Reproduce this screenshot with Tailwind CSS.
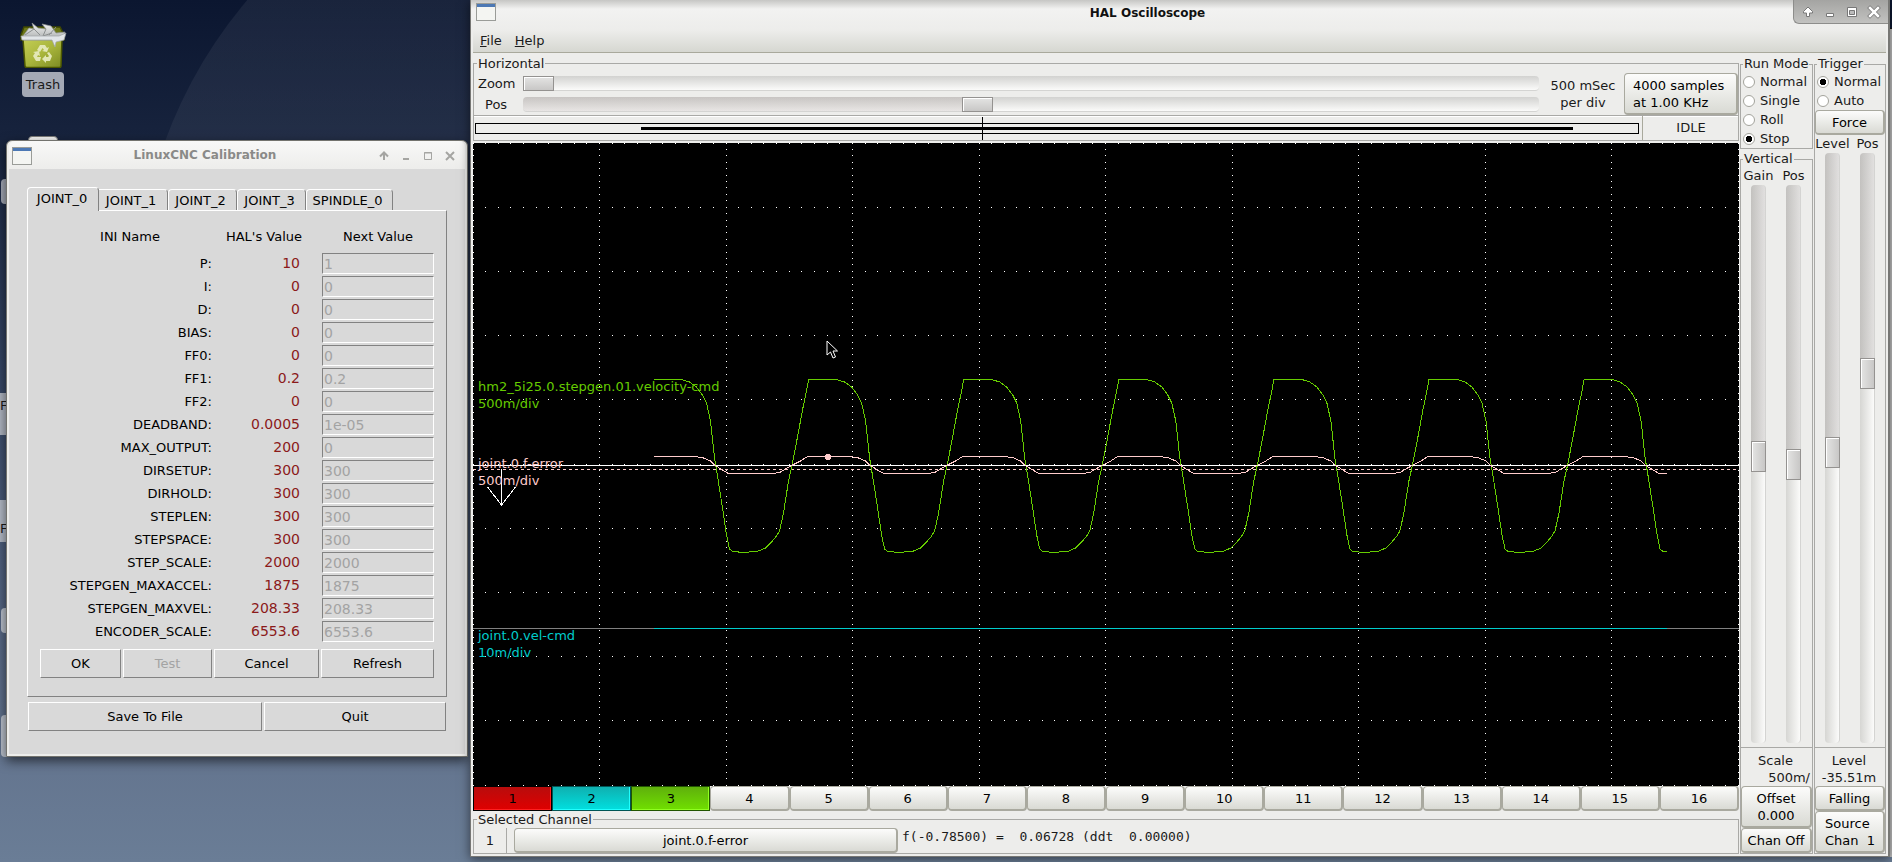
<!DOCTYPE html>
<html lang="en">
<head>
<meta charset="utf-8">
<title>HAL Oscilloscope</title>
<script src="https://cdn.jsdelivr.net/npm/@tailwindcss/browser@4"></script>
</head>
<body class="relative h-screen overflow-hidden bg-[linear-gradient(#0b1630_0%,#17233d_16%,#354563_42%,#50617f_65%,#64758f_88%,#6a7d96_100%)] text-[13px] leading-[17px] text-[#1a1a1a] [font-family:'DejaVu_Sans',sans-serif]">

<!-- desktop -->
<div class="absolute -top-[163px] left-[137px] size-[926px] rounded-full bg-[linear-gradient(#ffffff12,#ffffff0c_40%,transparent_70%)]"></div>
<div class="absolute top-5 left-[15px] flex w-14 flex-col items-center gap-1">
  <svg class="h-12 w-14" viewBox="0 0 56 48" aria-hidden="true">
    <defs>
      <linearGradient id="bin" x2="1" y2="1"><stop stop-color="#c3cd55"/><stop offset=".5" stop-color="#a9b63c"/><stop offset="1" stop-color="#7c8a22"/></linearGradient>
      <linearGradient id="paper" x2="0" y2="1"><stop stop-color="#f4f4f4"/><stop offset="1" stop-color="#a9adad"/></linearGradient>
    </defs>
    <path d="M9 7H45L49 15V20H6V15Z" fill="#6c7717" stroke="#3e4700" stroke-width="1.5"/>
    <path d="M8 19H47L46 46Q46 47.500 44 47.500H12Q10 47.500 10 46Z" fill="url(#bin)" stroke="#4d5800" stroke-width="1.500"/>
    <path d="M8 16L14 8L19 9L17 3L23 8L31 9L27 4L36 6L41 13L50 12L47 20H8Z" fill="url(#paper)" stroke="#8e9292" stroke-width=".7"/>
    <path d="M10 15L19 9L25 15M31 9L28 16L37 13M41 7L34 15" fill="none" stroke="#8b8f8f"/>
    <path d="M6 16H44L51 13L49 20L41 22L40 27L37 20H7Z" fill="#e1e5e8" stroke="#a0a5a8" stroke-width=".7"/>
    <g fill="#e2e7b5">
      <path d="M22 30L25 25H30L32 28L34 27L32 32L27 31L29 30L27.500 28L25 32Z"/>
      <path d="M34 32L37 36L35 41H31V43L27 39L31 35V37H33L34 36L32 33Z"/>
      <path d="M25 41H21L18 36L20 33L18 32L24 31L25 36L23 35L22 37H26Z"/>
    </g>
  </svg>
  <span class="rounded bg-[#a4a9b5] px-1 py-1">Trash</span>
</div>
<div class="absolute top-[136px] left-7 h-3 w-[30px] rounded-t-sm border border-[#7b7b78] bg-[#f4f4f2]"></div>
<div class="absolute top-[179px] left-px h-[25px] w-5 rounded bg-[#a4a9b5]"></div>
<div class="absolute top-[393px] left-0 h-[42px] w-5 bg-[#b0b6c2] pt-1">F</div>
<div class="absolute top-[500px] left-0 h-[42px] w-5 bg-[#b4bbc7] pt-5">F</div>
<div class="absolute top-[608px] left-px h-[25px] w-5 rounded bg-[#bcc3ce]"></div>
<div class="absolute top-[715px] left-px h-[42px] w-5 rounded bg-[#bcc3ce]"></div>

<!-- calibration window -->
<section class="absolute top-[140px] left-[6px] w-[462px] rounded-t-md border border-[#73736e] bg-[#ededeb] px-[2px] pb-[2px] text-black shadow-[0_4px_12px_#0009]">
  <header class="flex h-7 items-center rounded-t-md bg-[linear-gradient(#f8f8f7,#ededeb)] pt-px pr-[7px] pl-[3px]">
    <svg class="h-[18px] w-5" viewBox="0 0 20 18" aria-hidden="true"><rect x=".5" y=".5" width="19" height="17" fill="#f4f5f2" stroke="#9a9c98"/><path d="M1 1H19V4H1Z" fill="#4c78b4"/></svg>
    <h1 class="flex-1 pl-[2px] text-center text-[12px] font-bold text-[#8a8a88]">LinuxCNC Calibration</h1>
    <div class="flex gap-[6px] text-[#a5a5a2]">
      <button aria-label="Shade" class="size-4"><svg viewBox="0 0 16 16" fill="none" stroke="currentColor" stroke-width="2"><path d="M8 12V5M4 8.500L8 4.500L12 8.500"/></svg></button>
      <button aria-label="Minimize" class="size-4"><svg viewBox="0 0 16 16"><path d="M5 10H11V12H5Z" fill="currentColor"/></svg></button>
      <button aria-label="Maximize" class="size-4"><svg viewBox="0 0 16 16" fill="none" stroke="currentColor"><path d="M4.500 4.500H11.500V11.500H4.500Z"/><path d="M4 5H12"/></svg></button>
      <button aria-label="Close" class="size-4"><svg viewBox="0 0 16 16" fill="none" stroke="currentColor" stroke-width="2"><path d="M4 4L12 12M12 4L4 12"/></svg></button>
    </div>
  </header>
  <div class="bg-[#d9d9d9] pt-[18px] pr-[18px] pb-[23px] pl-[18px]">
    <div role="tablist" class="flex items-end">
      <button role="tab" aria-selected="true" class="relative -mb-px h-6 w-[72px] rounded-t-sm border-t border-r border-l border-t-white border-r-[#828282] border-l-white bg-[#d9d9d9] pr-[2px] pb-[2px]">JOINT_0</button>
      <button role="tab" class="h-[21px] w-[69px] rounded-tr-sm border-t border-r border-t-white border-r-[#828282] pr-1">JOINT_1</button>
      <button role="tab" class="h-[21px] w-[69px] rounded-t-sm border-t border-r border-l border-t-white border-r-[#828282] border-l-white pr-1">JOINT_2</button>
      <button role="tab" class="h-[21px] w-[69px] rounded-t-sm border-t border-r border-l border-t-white border-r-[#828282] border-l-white pr-1">JOINT_3</button>
      <button role="tab" class="h-[21px] w-[87px] rounded-t-sm border-t border-r border-l border-t-white border-r-[#828282] border-l-white pr-1">SPINDLE_0</button>
    </div>
    <div role="tabpanel" class="border border-t-white border-r-[#828282] border-b-[#828282] border-l-white pt-[9px] pr-3 pb-[18px] pl-3">
      <table class="w-full table-fixed border-collapse">
        <thead>
          <tr class="h-8"><th class="w-[172px] pl-2 font-normal">INI Name</th><th class="pr-[6px] font-normal">HAL's Value</th><th class="w-[112px] font-normal">Next Value</th></tr>
        </thead>
        <tbody id="params"></tbody>
      </table>
      <div class="mt-[6px] flex gap-[2px]">
        <button class="h-[29px] w-[81px] border border-t-white border-r-[#828282] border-b-[#828282] border-l-white">OK</button>
        <button disabled class="h-[29px] w-[89px] border border-t-white border-r-[#828282] border-b-[#828282] border-l-white text-[#a3a3a3]">Test</button>
        <button class="h-[29px] w-[105px] border border-t-white border-r-[#828282] border-b-[#828282] border-l-white">Cancel</button>
        <button class="h-[29px] flex-1 border border-t-white border-r-[#828282] border-b-[#828282] border-l-white">Refresh</button>
      </div>
    </div>
    <div class="mt-[5px] flex gap-[2px] px-px">
      <button class="h-[29px] w-[234px] border border-t-white border-r-[#828282] border-b-[#828282] border-l-white">Save To File</button>
      <button class="h-[29px] flex-1 border border-t-white border-r-[#828282] border-b-[#828282] border-l-white">Quit</button>
    </div>
  </div>
</section>

<div class="absolute top-7 right-0 bottom-[5px] w-[3px] border-t border-[#111] bg-[#c4c4c4]"></div>

<!-- oscilloscope window -->
<section class="absolute top-0 right-[2px] bottom-[5px] left-[470px] flex flex-col border-r-2 border-b border-l border-[#777774] bg-[#ededeb] pr-[2px] pb-[2px] pl-[2px] shadow-[0_2px_10px_#0008]">
  <header class="-mx-[2px] flex h-[30px] bg-[linear-gradient(#c6c6c4,#f2f2f1_30%,#ededeb)] pl-[5px]">
    <svg class="mt-[3px] h-[18px] w-5" viewBox="0 0 20 18" aria-hidden="true"><rect x=".5" y=".5" width="19" height="17" fill="#f4f5f2" stroke="#9a9c98"/><path d="M1 1H19V4H1Z" fill="#4c78b4"/></svg>
    <h1 class="flex-1 pt-[5px] pl-[6px] text-center text-[12px] font-bold text-[#111]">HAL Oscilloscope</h1>
    <div class="flex h-6 items-center gap-[6px] rounded-bl-md border-b border-l border-[#8d8d8b] bg-[linear-gradient(#a4a4a2,#c2c2c0)] px-[6px]">
      <button aria-label="Shade" class="size-4"><svg viewBox="0 0 16 16"><path d="M8 3L12.500 7.500V9H9.500V12.500H6.500V9H3.500V7.500Z" fill="#fff" stroke="#777"/></svg></button>
      <button aria-label="Minimize" class="size-4"><svg viewBox="0 0 16 16"><path d="M4.500 9.500H11.500V12.500H4.500Z" fill="#fff" stroke="#777"/></svg></button>
      <button aria-label="Maximize" class="size-4"><svg viewBox="0 0 16 16"><path d="M3.500 3.500H12.500V12.500H3.500Z" fill="#fff" stroke="#777"/><path d="M5.500 6.500H10.500V10.500H5.500Z" fill="#bbb" stroke="#777"/></svg></button>
      <button aria-label="Close" class="size-4"><svg viewBox="0 0 16 16" fill="none"><path d="M4 4L12 12M12 4L4 12" stroke="#777" stroke-width="4" stroke-linecap="square"/><path d="M4 4L12 12M12 4L4 12" stroke="#fff" stroke-width="2.500" stroke-linecap="square"/></svg></button>
    </div>
  </header>
  <nav class="flex h-[23px] items-center gap-[13px] border-b border-[#a9a99c] bg-[linear-gradient(#ededeb,#d6d7d1)] pb-[2px] pl-[7px]">
    <button class="leading-[17px]"><span class="underline">F</span>ile</button>
    <button class="leading-[17px]"><span class="underline">H</span>elp</button>
  </nav>

  <div class="flex min-h-0 flex-1">
    <div class="flex min-w-0 flex-1 flex-col">
      <fieldset class="mt-[2px] mb-[2px] h-[86px] min-w-0 border border-[#a9a9a6]">
        <legend class="ml-[3px] h-[17px] px-px">Horizontal</legend>
        <div class="flex h-[43px] items-end">
          <div class="flex min-w-0 flex-1 flex-col gap-1 self-start pt-[3px] pr-[9px]">
            <div class="flex h-[17px] items-center">
              <label for="zoom" class="w-[49px] pl-1">Zoom</label>
              <input id="zoom" type="range" min="0" max="1000" value="0" class="h-[15px] min-w-0 flex-1 appearance-none rounded-sm border-b border-[#d4d4d2] bg-[linear-gradient(#d2d2d0,#fbfbfa)] [&::-webkit-slider-thumb]:h-[15px] [&::-webkit-slider-thumb]:w-[31px] [&::-webkit-slider-thumb]:appearance-none [&::-webkit-slider-thumb]:border [&::-webkit-slider-thumb]:border-[#949290] [&::-webkit-slider-thumb]:bg-[linear-gradient(#e4e4e3,#c8c7c6)] [&::-webkit-slider-thumb]:shadow-[inset_1px_1px_#fff]">
            </div>
            <div class="flex h-[17px] items-center">
              <label for="hpos" class="w-[49px] pl-[11px]">Pos</label>
              <input id="hpos" type="range" min="0" max="1000" value="446" class="h-[15px] min-w-0 flex-1 appearance-none rounded-sm border-b border-[#d4d4d2] bg-[linear-gradient(to_right,#9d8f8c33_44%,transparent_44%),linear-gradient(#d2d2d0,#fbfbfa)] [&::-webkit-slider-thumb]:h-[15px] [&::-webkit-slider-thumb]:w-[31px] [&::-webkit-slider-thumb]:appearance-none [&::-webkit-slider-thumb]:border [&::-webkit-slider-thumb]:border-[#949290] [&::-webkit-slider-thumb]:bg-[linear-gradient(#e4e4e3,#c8c7c6)] [&::-webkit-slider-thumb]:shadow-[inset_1px_1px_#fff]">
            </div>
          </div>
          <div class="mr-[6px] w-[70px] pb-1 text-center whitespace-nowrap">500 mSec<br>per div</div>
          <button class="h-[42px] w-[114px] rounded-sm border border-r-2 border-b-2 border-[#a9a99f] bg-[linear-gradient(#fcfcfb,#d9dad4)] pl-2 text-left text-black">4000 samples<br>at 1.00 KHz</button>
        </div>
        <div class="flex h-[25px] border-t border-[#a9a9a6] shadow-[inset_0_1px_#fff]">
          <div class="min-w-0 flex-1 px-px pr-[3px]">
            <svg class="h-6 w-full" viewBox="0 0 1164 24" preserveAspectRatio="none" shape-rendering="crispEdges" aria-label="Record position">
              <path d="M.5 7.500H1163.500V17.500H.5Z" fill="none" stroke="#000"/>
              <path d="M166 11H1098V14H166Z"/><path d="M507 1H508V24H507Z"/>
            </svg>
          </div>
          <output class="w-[96px] border-l border-[#a9a99c] pt-[3px] pl-px text-center">IDLE</output>
        </div>
      </fieldset>

      <div class="relative min-h-0 flex-1 bg-black">
        <svg class="absolute inset-0 h-full w-full" viewBox="0 0 1266 643" preserveAspectRatio="none" shape-rendering="crispEdges" fill="none" aria-label="Scope traces">
          <path id="grid" fill="#fff"/>
          <path d="M0 485.500H1266" stroke="#808080"/>
          <path d="M181 485.500H1194" stroke="#00cccc"/>
          <path d="M0 322.500H1266" stroke="#fff"/>
          <path d="M0 326.500H1266" stroke="#ffcccc" stroke-dasharray="3 3"/>
          <path id="velocity" stroke="#66cc00"/>
          <path id="ferror" stroke="#ffcccc"/>
          <path d="M28.500 326V362M14.500 344L28.500 362L42.500 344" stroke="#fff"/>
          <circle cx="355" cy="314" r="3" fill="#ffcccc"/>
        </svg>
        <p class="absolute top-[235px] left-[5px] text-[#66cc00]">hm2_5i25.0.stepgen.01.velocity-cmd<br>500m/div</p>
        <p class="absolute top-[312px] left-[5px] text-[#ffcccc]">joint.0.f-error<br>500m/div</p>
        <p class="absolute top-[484px] left-[5px] text-[#00cccc]">joint.0.vel-cmd<br>10m/div</p>
        <svg class="absolute top-[197px] left-[353px] h-[19px] w-3" viewBox="0 0 12 19" aria-hidden="true"><path d="M1 1V15L4.500 12L7 18L9.500 17L7 11H11.500Z" fill="#000" stroke="#fff"/></svg>
      </div>

      <div id="channels" class="grid h-[25px] grid-cols-16">
        <button class="border border-black bg-[linear-gradient(#b80c0c,#e00000)] text-black shadow-[inset_-1px_-1px_#ff2020]">1</button>
        <button class="border border-[#055] bg-[linear-gradient(#0fb0b0,#00e0e0)] text-black shadow-[inset_-1px_-1px_#20ffff]">2</button>
        <button class="border border-[#250] bg-[linear-gradient(#5fb00c,#70e000)] text-black shadow-[inset_-1px_-1px_#90ff20]">3</button>
      </div>

      <fieldset class="min-w-0 border border-[#a9a9a6]">
        <legend class="ml-[3px] h-[17px] px-px">Selected Channel</legend>
        <div class="flex h-[25px] items-start">
          <output class="h-[25px] w-[33px] border-r border-[#a9a9a6] pt-1 text-center">1</output>
          <button class="ml-[7px] h-[25px] w-[384px] rounded-sm border border-r-2 border-b-2 border-[#a9a99f] bg-[linear-gradient(#fcfcfb,#d9dad4)] text-black">joint.0.f-error</button>
          <output class="ml-1 whitespace-pre [font-family:'DejaVu_Sans_Mono',monospace]">f(-0.78500) =  0.06728 (ddt  0.00000)</output>
        </div>
      </fieldset>
    </div>

    <div class="ml-px flex w-[73px] flex-col pt-[3px]">
      <fieldset class="min-w-0 border border-[#a9a9a6]">
        <legend class="ml-[2px] h-4 px-px leading-4 whitespace-nowrap">Run Mode</legend>
        <div id="runmode"></div>
      </fieldset>
      <fieldset class="mt-[2px] flex min-h-0 min-w-0 flex-1 flex-col border border-[#a9a9a6]">
        <legend class="ml-[2px] h-4 px-px leading-4">Vertical</legend>
        <div class="flex h-full flex-col">
          <div class="flex min-h-0 flex-1 pb-1">
            <label class="flex w-[35px] flex-col items-center gap-px">Gain
              <input type="range" min="0" max="1000" value="486" class="min-h-0 w-[15px] flex-1 appearance-none rounded-sm border-r border-[#d4d4d2] bg-[linear-gradient(#77707033_50%,transparent_50%),linear-gradient(to_right,#d6d6d3,#fbfbfa)] [writing-mode:vertical-lr] [&::-webkit-slider-thumb]:h-[31px] [&::-webkit-slider-thumb]:w-[15px] [&::-webkit-slider-thumb]:appearance-none [&::-webkit-slider-thumb]:border [&::-webkit-slider-thumb]:border-[#949290] [&::-webkit-slider-thumb]:bg-[linear-gradient(to_right,#e4e4e3,#c8c7c6)] [&::-webkit-slider-thumb]:shadow-[inset_1px_1px_#fff]">
            </label>
            <label class="flex w-[35px] flex-col items-center gap-px">Pos
              <input type="range" min="0" max="1000" value="500" class="min-h-0 w-[15px] flex-1 appearance-none rounded-sm border-r border-[#d4d4d2] bg-[linear-gradient(#77707033_50%,transparent_50%),linear-gradient(to_right,#d6d6d3,#fbfbfa)] [writing-mode:vertical-lr] [&::-webkit-slider-thumb]:h-[31px] [&::-webkit-slider-thumb]:w-[15px] [&::-webkit-slider-thumb]:appearance-none [&::-webkit-slider-thumb]:border [&::-webkit-slider-thumb]:border-[#949290] [&::-webkit-slider-thumb]:bg-[linear-gradient(to_right,#e4e4e3,#c8c7c6)] [&::-webkit-slider-thumb]:shadow-[inset_1px_1px_#fff]">
            </label>
          </div>
          <div class="border-t border-[#a9a9a6] pt-1 pr-[2px] text-center">Scale</div>
          <div class="pr-[2px] text-right">500m/</div>
          <button class="h-[42px] rounded-sm border border-r-2 border-b-2 border-[#a9a99f] bg-[linear-gradient(#fcfcfb,#d9dad4)] text-black">Offset<br>0.000</button>
          <button class="h-[25px] rounded-sm border border-r-2 border-b-2 border-[#a9a99f] bg-[linear-gradient(#fcfcfb,#d9dad4)] whitespace-nowrap text-black">Chan Off</button>
        </div>
      </fieldset>
    </div>

    <div class="ml-px flex w-[72px] flex-col pt-[3px]">
      <fieldset class="flex min-h-0 min-w-0 flex-1 flex-col border border-[#a9a9a6]">
        <legend class="ml-[2px] h-4 px-px leading-4">Trigger</legend>
        <div class="flex h-full flex-col">
          <div id="trigmode"></div>
          <button class="h-[25px] shrink-0 rounded-sm border border-r-2 border-b-2 border-[#a9a99f] bg-[linear-gradient(#fcfcfb,#d9dad4)] text-black">Force</button>
          <div class="flex min-h-0 flex-1 pb-1">
            <label class="flex w-[35px] flex-col items-center gap-px">Level
              <input type="range" min="0" max="1000" value="508" class="min-h-0 w-[15px] flex-1 appearance-none rounded-sm border-r border-[#d4d4d2] bg-[linear-gradient(#77707033_50%,transparent_50%),linear-gradient(to_right,#d6d6d3,#fbfbfa)] [writing-mode:vertical-lr] [&::-webkit-slider-thumb]:h-[31px] [&::-webkit-slider-thumb]:w-[15px] [&::-webkit-slider-thumb]:appearance-none [&::-webkit-slider-thumb]:border [&::-webkit-slider-thumb]:border-[#949290] [&::-webkit-slider-thumb]:bg-[linear-gradient(to_right,#e4e4e3,#c8c7c6)] [&::-webkit-slider-thumb]:shadow-[inset_1px_1px_#fff]">
            </label>
            <label class="flex w-[35px] flex-col items-center gap-px">Pos
              <input type="range" min="0" max="1000" value="367" class="min-h-0 w-[15px] flex-1 appearance-none rounded-sm border-r border-[#d4d4d2] bg-[linear-gradient(#77707033_37%,transparent_37%),linear-gradient(to_right,#d6d6d3,#fbfbfa)] [writing-mode:vertical-lr] [&::-webkit-slider-thumb]:h-[31px] [&::-webkit-slider-thumb]:w-[15px] [&::-webkit-slider-thumb]:appearance-none [&::-webkit-slider-thumb]:border [&::-webkit-slider-thumb]:border-[#949290] [&::-webkit-slider-thumb]:bg-[linear-gradient(to_right,#e4e4e3,#c8c7c6)] [&::-webkit-slider-thumb]:shadow-[inset_1px_1px_#fff]">
            </label>
          </div>
          <div class="border-t border-[#a9a9a6] pt-1 pr-[2px] text-center">Level</div>
          <div class="pr-[2px] text-center">-35.51m</div>
          <button class="h-[25px] rounded-sm border border-r-2 border-b-2 border-[#a9a99f] bg-[linear-gradient(#fcfcfb,#d9dad4)] text-black">Falling</button>
          <button class="h-[42px] rounded-sm border border-r-2 border-b-2 border-[#a9a99f] bg-[linear-gradient(#fcfcfb,#d9dad4)] pl-[9px] text-left whitespace-pre text-black">Source<br>Chan  1</button>
        </div>
      </fieldset>
    </div>
  </div>
</section>

<script>
// tuning parameters: name, value in HAL, pending value
const params = [['P','10','1'],['I','0','0'],['D','0','0'],['BIAS','0','0'],['FF0','0','0'],['FF1','0.2','0.2'],['FF2','0','0'],
  ['DEADBAND','0.0005','1e-05'],['MAX_OUTPUT','200','0'],['DIRSETUP','300','300'],['DIRHOLD','300','300'],['STEPLEN','300','300'],
  ['STEPSPACE','300','300'],['STEP_SCALE','2000','2000'],['STEPGEN_MAXACCEL','1875','1875'],['STEPGEN_MAXVEL','208.33','208.33'],['ENCODER_SCALE','6553.6','6553.6']];
document.getElementById('params').innerHTML = params.map(([n, v, next]) => `<tr class="h-[23px]">
  <th class="p-0 text-right font-normal"><label for="p-${n}">${n}:</label></th>
  <td class="p-0 pr-[22px] text-right text-[14px] text-[#8b1a1a]">${v}</td>
  <td class="p-0"><input id="p-${n}" disabled value="${next}" class="block h-[21px] w-full border border-t-[#828282] border-r-white border-b-white border-l-[#828282] bg-[#d9d9d9] pl-px text-[14px] text-[#a3a3a3]"></td></tr>`).join('');

const radios = (group, names, on) => names.map(n => `<label class="flex h-[19px] items-center gap-[5px] pl-[2px] whitespace-nowrap">
  <input type="radio" name="${group}" ${n === on ? 'checked' : ''} class="size-3 shrink-0 appearance-none rounded-full border border-[#a3a39c] bg-white checked:bg-[radial-gradient(#000_3px,#fff_3px)]">${n}</label>`).join('');
document.getElementById('runmode').innerHTML = radios('run', ['Normal', 'Single', 'Roll', 'Stop'], 'Stop');
document.getElementById('trigmode').innerHTML = radios('trig', ['Normal', 'Auto'], 'Normal');

let buttons = '';
for (let i = 4; i <= 16; i++) buttons += `<button class="rounded-sm border border-r-2 border-b-2 border-[#a9a99f] bg-[linear-gradient(#fcfcfb,#d9dad4)] text-black">${i}</button>`;
document.getElementById('channels').insertAdjacentHTML('beforeend', buttons);

// graticule: 10 x 10 divisions with 10 dots to each
let dots = '';
const dot = (x, y) => { dots += `M${Math.floor(x)} ${Math.floor(y)}h1v1h-1z`; };
for (let d = 0; d <= 10; d++) for (let k = 0; k <= 100; k++) { dot(k * 12.65, d * 64.2); dot(d * 126.5, k * 6.42); }
document.getElementById('grid').setAttribute('d', dots);

// one period of each trace, repeated until the end of the record
const trace = (id, pts) => {
  const out = [];
  for (let p = 0; p < 7; p++) for (const [x, y] of pts) {
    const px = 180.500 + p * 155.100 + x;
    if (px <= 1194) out.push(`${px.toFixed(1)} ${y}`);
  }
  const last = out[out.length - 1].split(' ')[1];
  document.getElementById(id).setAttribute('d', 'M' + out.join('L') + `L1194 ${last}`);
};
trace('velocity', [[0,236.5],[28,236.5],[36,239],[43,244],[49,252],[53,260],[57,278],[61,315],[64,333],[69,365],[73,392],[76,406],[79,408.5],[91,409.5],[105,408],[112,405],[118,399],[123,393],[126,388],[130,370],[135,338],[139,320],[144,294],[149,267],[153,248]]);
trace('ferror', [[0,313.5],[41,313.5],[50,315],[57,318],[61,322],[69,327],[75,330.5],[120,330.5],[127,329],[132,326],[139,322],[147,318],[154,313.5]]);
</script>
</body>
</html>
